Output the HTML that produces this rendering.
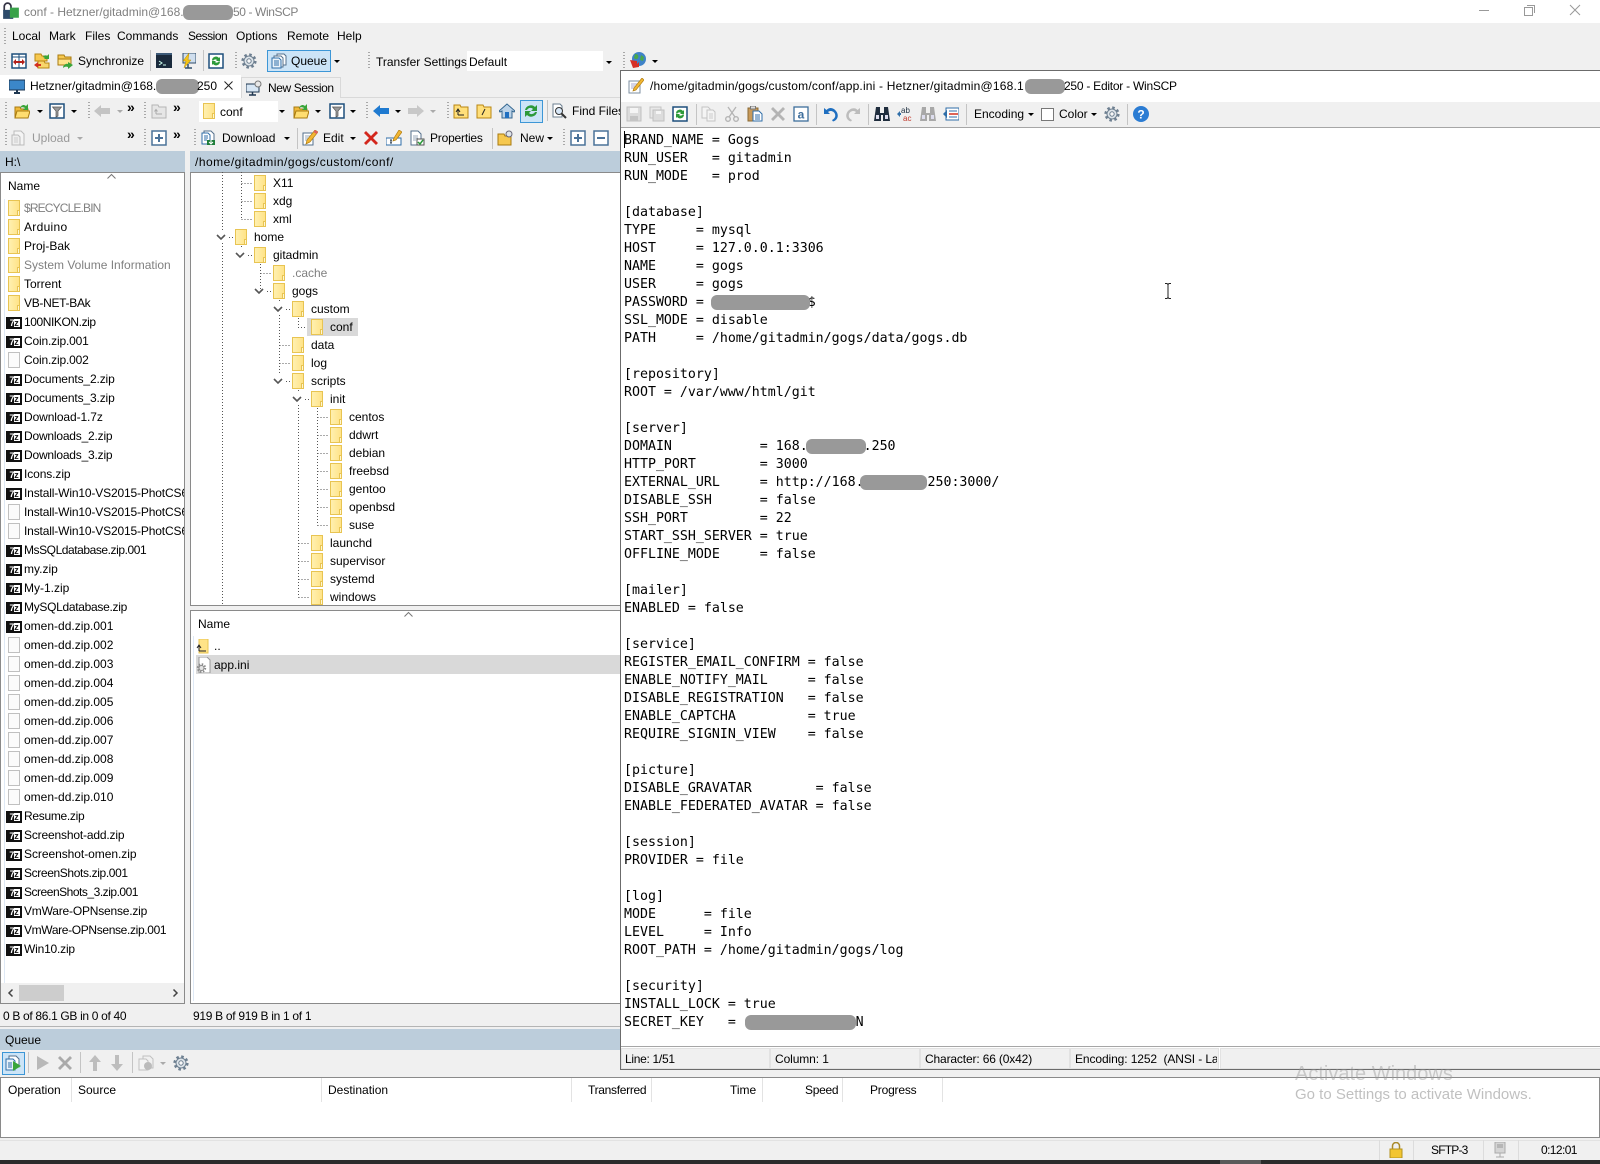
<!DOCTYPE html>
<html><head><meta charset="utf-8"><title>WinSCP</title>
<style>
html,body{margin:0;padding:0}
body{width:1600px;height:1164px;overflow:hidden;position:relative;background:#f0f0f0;font:12px/16px "Liberation Sans",sans-serif;color:#000}
.p{position:absolute}
.t{position:absolute;white-space:nowrap;line-height:16px;height:16px}
.i{position:absolute;width:16px;height:16px;overflow:visible}
.g{position:absolute;width:2px;height:18px;background:repeating-linear-gradient(#a8a8a8 0 1px,transparent 1px 3px)}
.s{position:absolute;width:1px;height:21px;background:#c4c4c4}
.a{position:absolute;width:0;height:0;border:3px solid transparent;border-top:3px solid #000;border-bottom:0}
.a.m{border-top-color:#aaa}
.b{position:absolute;background:#999;border-radius:6px;height:15px}
.ch{position:absolute;font-size:14px;font-weight:bold;line-height:10px}
.f{position:absolute;width:12px;height:16px;box-sizing:border-box;background:linear-gradient(90deg,#fff0b0,#ffe388);border:1px solid #e8c452;display:block}
.f:after{content:"";position:absolute;right:-1px;bottom:-1px;width:1px;height:4px;background:#fff6d0;border:1px solid #e8c452}
.d{position:absolute;left:8px;top:1px;width:12px;height:16px;box-sizing:border-box;background:#fbfbfb;border:1px solid #c0c0c0;display:block}
.z{position:absolute;left:6px;top:4px;width:16px;height:12px;box-sizing:border-box;border:2px solid #111;background:linear-gradient(90deg,#111 50%,#fff 50%);font:bold 9px/8px "Liberation Sans",sans-serif;text-align:center;overflow:hidden;display:block;font-style:normal;color:#111}
.z b{color:#fff;font-weight:bold}
.panel{position:absolute;background:#fff;box-shadow:inset 0 0 0 1px #8a8a8a;overflow:hidden}
.r{height:19px;line-height:19px;padding-left:23px;position:relative;white-space:nowrap;overflow:hidden}
.r .f{left:7px;top:1px}
.r .d{left:7px}
.r .z{left:5px}
.n{position:absolute;height:16px;line-height:16px;white-space:nowrap;padding-left:19px}
.n .f{left:0;top:0}
.gr{color:#808080}
.hd{position:absolute;height:21px;background:#bccddb}
pre{position:absolute;margin:0;left:624px;top:132px;font:13.28px/18px "DejaVu Sans Mono","Liberation Mono",monospace;color:#000}
.sp{position:absolute;top:1078px;width:1px;height:24px;background:#e3e3e3}
.es{position:absolute;top:1049px;height:19px;background:#f0f0f0;box-shadow:0 0 0 1px #e2e2e2}
</style></head><body>
<svg width="0" height="0" style="position:absolute"><defs>
<symbol id="cmp" viewBox="0 0 16 16"><rect x="1" y="1" width="14" height="14" fill="#fff" stroke="#1d4f7c" stroke-width="1.5"/><path d="M8 1v14M1 4h14" stroke="#1d4f7c"/><path d="M2 9l3-3v6zM14 9l-3-3v6zM5 8h6v2H5z" fill="#b3201a"/></symbol>
<symbol id="sf" viewBox="0 0 16 16"><path d="M1 1h6l1 2h5v5H1z" fill="#f6c84f" stroke="#b98612"/><path d="M4 8h6l1 2h4v5H4z" fill="#f8d56c" stroke="#b98612"/><path d="M9 4c1-2 3-2 4-1l2-2v5h-5l1-1-2-1z" fill="#39a53a"/><path d="M0 12l4-3v2h3v2H4v2z" fill="#d3301f"/></symbol>
<symbol id="sg" viewBox="0 0 16 16"><path d="M1 2h6l1 2h6v8H1z" fill="#f6c84f" stroke="#a87a10"/><path d="M1 6h13v6H1z" fill="#ffe38a" stroke="#a87a10"/><path d="M6 15c0-3 3-5 5-4V9l5 3-5 4v-2c-2-1-4 0-5 1z" fill="#3aa53a"/></symbol>
<symbol id="term" viewBox="0 0 16 16"><rect x="0" y="0" width="16" height="15" fill="#1a2a3c"/><rect x="0" y="0" width="16" height="2" fill="#3d5a78"/><path d="M3 8l3 2-3 2" fill="none" stroke="#cfe"/><path d="M7 12h3" stroke="#cfe"/></symbol>
<symbol id="bolt" viewBox="0 0 16 16"><rect x="3" y="0" width="13" height="10" fill="#cfdeee" stroke="#2f4d6b"/><path d="M5 15h7M8 11v4" stroke="#2f4d6b" stroke-width="1.500"/><path d="M9 0L3 8h3L4 15l7-8H8z" fill="#f5c518" stroke="#b88a00" stroke-width=".5"/></symbol>
<symbol id="rf" viewBox="0 0 16 16"><rect x="1" y="1" width="14" height="14" fill="#fff" stroke="#1d4f7c" stroke-width="1.5"/><path d="M4 7a4 4 0 0 1 7-2l1-1v4H8l1-1a2.500 2.500 0 0 0-4 1z" fill="#2d9a3a"/><path d="M12 9a4 4 0 0 1-7 2l-1 1V8h4l-1 1a2.500 2.500 0 0 0 4-1z" fill="#2d9a3a"/></symbol>
<symbol id="gear" viewBox="0 0 16 16"><circle cx="8" cy="8" r="6.300" fill="none" stroke="#6d7f90" stroke-width="2.600" stroke-dasharray="2.500 2.450"/><circle cx="8" cy="8" r="5" fill="#dfe5ea" stroke="#6d7f90"/><circle cx="8" cy="8" r="2.200" fill="#f8f8f8" stroke="#6d7f90"/></symbol>
<symbol id="q" viewBox="0 0 16 16"><path d="M6 1h7l2 2v9h-9z" fill="#fff" stroke="#55708c"/><path d="M3 3h7l2 2v9H3z" fill="#fff" stroke="#55708c"/><path d="M1 5h7l2 2v8H1z" fill="#eaf2fa" stroke="#2f6ea8"/><path d="M3 8h5M3 10h5M3 12h5" stroke="#2f6ea8"/></symbol>
<symbol id="mon" viewBox="0 0 16 16"><rect x="0" y="1" width="16" height="10" fill="#3b87c9" stroke="#1e3650"/><path d="M5 14h6M8 11v3" stroke="#1e3650" stroke-width="2"/></symbol>
<symbol id="ns" viewBox="0 0 16 16"><rect x="0" y="4" width="13" height="8" fill="#d7e6f4" stroke="#1e3650"/><path d="M3 15h7M6.500 12v3" stroke="#1e3650" stroke-width="1.500"/><circle cx="12" cy="4" r="3" fill="#e8e8e8" stroke="#777"/></symbol>
<symbol id="fo" viewBox="0 0 16 16"><path d="M1 4h5l1 2h7v9H1z" fill="#f0b93a" stroke="#a87a10"/><path d="M3 8h13l-2 7H1z" fill="#ffdd70" stroke="#a87a10"/><path d="M6 5c1-3 4-4 6-2l2-2v6H9l2-2c-2-1-3-1-5 0z" fill="#3aa53a"/></symbol>
<symbol id="fil" viewBox="0 0 16 16"><rect x="1" y="1" width="14" height="14" fill="#fff" stroke="#1d4f7c" stroke-width="1.500"/><path d="M3.500 4h9L9 8v5L7 14V8z" fill="#9a9a9a" stroke="#555" stroke-width=".7"/></symbol>
<symbol id="al" viewBox="0 0 16 16"><path d="M0 8l7-6v3h9v6H7v3z" fill="currentColor"/></symbol>
<symbol id="ar" viewBox="0 0 16 16"><path d="M16 8L9 2v3H0v6h9v3z" fill="currentColor"/></symbol>
<symbol id="fg" viewBox="0 0 16 16"><path d="M1 2h6l1 2h7v11H1z" fill="#e6e6e6" stroke="#b5b5b5"/><path d="M5 11h6M5 11V7M3.500 8.500L5 6.500l1.500 2" fill="none" stroke="#aaa"/></symbol>
<symbol id="fu" viewBox="0 0 16 16"><path d="M1 2h6l1 2h7v11H1z" fill="#ffdf7a" stroke="#b98612"/><path d="M5 12h6M5 12V7M3 9l2-3 2 3" fill="none" stroke="#222"/></symbol>
<symbol id="fr" viewBox="0 0 16 16"><path d="M1 2h6l1 2h7v11H1z" fill="#ffdf7a" stroke="#b98612"/><path d="M6 12l3-6" stroke="#222"/></symbol>
<symbol id="home" viewBox="0 0 16 16"><path d="M8 1L0 8l1 1 2-1v7h10V8l2 1 1-1z" fill="#bcd3e8" stroke="#33668f"/><rect x="6" y="9" width="4" height="6" fill="#1f6fc0"/></symbol>
<symbol id="find" viewBox="0 0 16 16"><path d="M2 1h7l2 2v11H2z" fill="#fff" stroke="#6c7f90"/><circle cx="8" cy="8" r="3.500" fill="#d8e8f8" stroke="#333"/><path d="M10.500 10.500L15 15" stroke="#333" stroke-width="2"/></symbol>
<symbol id="ul" viewBox="0 0 16 16"><path d="M3 1h7l3 3v11H3z" fill="#f4f4f4" stroke="#bbb"/><path d="M1 5h6l2 2v8H1z" fill="#eee" stroke="#bbb"/><path d="M3 8h4M3 10h4M3 12h4" stroke="#ccc"/></symbol>
<symbol id="pl" viewBox="0 0 16 16"><rect x="1" y="1" width="14" height="14" fill="#fff" stroke="#4a7299" stroke-width="1.500"/><path d="M4 8h8M8 4v8" stroke="#4a7299" stroke-width="2"/></symbol>
<symbol id="mi" viewBox="0 0 16 16"><rect x="1" y="1" width="14" height="14" fill="#fff" stroke="#4a7299" stroke-width="1.500"/><path d="M4 8h8" stroke="#4a7299" stroke-width="2"/></symbol>
<symbol id="dl" viewBox="0 0 16 16"><path d="M4 1h7l3 3v8H4z" fill="#fff" stroke="#55708c"/><path d="M2 3h6l2 2v9H2z" fill="#fff" stroke="#2f6ea8"/><path d="M4 6h4M4 8h4M4 10h3" stroke="#2f6ea8"/><path d="M7 10h8v5H7z" fill="#1e7d3a"/><path d="M11 9v5M9 12l2 2 2-2" stroke="#fff" fill="none"/></symbol>
<symbol id="ed" viewBox="0 0 16 16"><path d="M1 3h10v12H1z" fill="#fff" stroke="#55708c"/><path d="M3 6h5M3 8h4M3 10h3" stroke="#9ab"/><path d="M13 0l3 2-8 10-4 2 1-4z" fill="#f2b632" stroke="#b07c10" stroke-width=".7"/><path d="M13 0l3 2-1.500 2-3-2z" fill="#e06060"/></symbol>
<symbol id="x" viewBox="0 0 16 16"><path d="M3 1L8 6l5-5 2 2-5 5 5 5-2 2-5-5-5 5-2-2 5-5-5-5z" fill="currentColor"/></symbol>
<symbol id="rn" viewBox="0 0 16 16"><rect x="0" y="8" width="15" height="7" fill="#fff" stroke="#2f6ea8"/><path d="M4 10h2M5 10v3M4 13h2" stroke="#234"/><path d="M13 0l3 2-6 8-3 1 1-3z" fill="#f2b632" stroke="#b07c10" stroke-width=".7"/></symbol>
<symbol id="pr" viewBox="0 0 16 16"><path d="M2 1h7l3 3v11H2z" fill="#fff" stroke="#55708c"/><path d="M4 6h5M4 8h5M4 10h3" stroke="#9ab"/><rect x="8" y="9" width="7" height="6" fill="#fff" stroke="#555"/><path d="M9 12l2 2 3-4" fill="none" stroke="#2d9a3a" stroke-width="1.500"/></symbol>
<symbol id="nw" viewBox="0 0 16 16"><path d="M1 4h6l1 2h6v9H1z" fill="#f6c84f" stroke="#a87a10"/><circle cx="12" cy="4" r="3" fill="#dfe5ea" stroke="#667"/></symbol>
<symbol id="sv" viewBox="0 0 16 16"><rect x="1" y="1" width="14" height="14" fill="#dcdcdc" stroke="#c0c0c0"/><rect x="4" y="2" width="8" height="5" fill="#f5f5f5"/><rect x="4" y="10" width="8" height="5" fill="#c4c4c4"/></symbol>
<symbol id="sa" viewBox="0 0 16 16"><rect x="1" y="1" width="11" height="11" fill="#e8e8e8" stroke="#c4c4c4"/><rect x="4" y="4" width="11" height="11" fill="#dcdcdc" stroke="#c0c0c0"/><rect x="7" y="5" width="5" height="3" fill="#f5f5f5"/></symbol>
<symbol id="cp" viewBox="0 0 16 16"><path d="M1 1h6l2 2v9H1z" fill="#f4f4f4" stroke="#c4c4c4"/><path d="M6 4h6l2 2v9H6z" fill="#f4f4f4" stroke="#c4c4c4"/><path d="M8 8h4M8 10h4M8 12h4" stroke="#ccc"/></symbol>
<symbol id="ct" viewBox="0 0 16 16"><circle cx="4" cy="13" r="2.300" fill="none" stroke="#b4b4b4" stroke-width="1.400"/><circle cx="12" cy="13" r="2.300" fill="none" stroke="#b4b4b4" stroke-width="1.400"/><path d="M5 11l7-10M11 11L4 1" stroke="#b4b4b4" stroke-width="1.300"/></symbol>
<symbol id="ps" viewBox="0 0 16 16"><rect x="1" y="2" width="10" height="13" fill="#c89a5a" stroke="#8a6a35"/><rect x="3.500" y="0" width="5" height="3" fill="#ddd" stroke="#777"/><path d="M6 5h6l3 3v7H6z" fill="#fff" stroke="#2f6ea8"/><path d="M8 9h5M8 11h5M8 13h5" stroke="#2f6ea8"/></symbol>
<symbol id="sl" viewBox="0 0 16 16"><rect x="1" y="1" width="14" height="14" fill="#fff" stroke="#3d6e9c" stroke-width="1.300"/><text x="8" y="12.500" font-size="12" font-weight="bold" text-anchor="middle" fill="#3d6e9c" font-family="Liberation Sans">a</text></symbol>
<symbol id="un" viewBox="0 0 16 16"><path d="M1 2v6h6L5 6c2-2 6-1 7 2 1 3-1 5-3 6l1 1.500c4-1 6-5 4-9S7 0 3.500 4z" fill="currentColor"/></symbol>
<symbol id="re" viewBox="0 0 16 16"><path d="M15 2v6H9l2-2c-2-2-6-1-7 2-1 3 1 5 3 6l-1 1.500c-4-1-6-5-4-9s8-6 10.500-2.500z" fill="currentColor"/></symbol>
<symbol id="bn" viewBox="0 0 16 16"><path d="M2 1h4v6h4V1h4l2 14H9V9H7v6H0z" fill="currentColor"/><rect x="2" y="9" width="3" height="4" fill="#dde"/><rect x="11" y="9" width="3" height="4" fill="#dde"/></symbol>
<symbol id="rp" viewBox="0 0 16 16"><text x="4" y="7" font-size="8" fill="#234" font-family="Liberation Sans">ab</text><text x="6" y="15" font-size="8" fill="#c0392b" font-family="Liberation Sans">ac</text><path d="M0 8l3-3v2h1v2H3v2z" fill="#2f6ea8"/></symbol>
<symbol id="gt" viewBox="0 0 16 16"><rect x="3" y="2" width="13" height="12" fill="#fff" stroke="#2f6ea8"/><path d="M6 5h8M6 11h8" stroke="#2f6ea8"/><path d="M6 8h9" stroke="#d3301f" stroke-width="1.500"/><path d="M0 8l4-4v8z" fill="#2f6ea8"/></symbol>
<symbol id="hp" viewBox="0 0 16 16"><circle cx="8" cy="8" r="8" fill="#2b7cd3"/><text x="8" y="12.500" font-size="12" font-weight="bold" text-anchor="middle" fill="#fff" font-family="Liberation Sans">?</text></symbol>
<symbol id="pk" viewBox="0 0 16 16"><path d="M2 1l12 7-12 7z" fill="#b8b8b8"/></symbol>
<symbol id="up" viewBox="0 0 16 16"><path d="M8 0l6 7H10v9H6V7H2z" fill="#bdbdbd"/></symbol>
<symbol id="dn" viewBox="0 0 16 16"><path d="M8 16l6-7H10V0H6v9H2z" fill="#bdbdbd"/></symbol>
<symbol id="qp" viewBox="0 0 16 16"><path d="M5 1h7l3 3v9H5z" fill="#f0f0f0" stroke="#c0c0c0"/><path d="M1 4h7l2 2v9H1z" fill="#f4f4f4" stroke="#c0c0c0"/><circle cx="10" cy="11" r="4" fill="#bbb"/></symbol>
<symbol id="qr" viewBox="0 0 16 16"><path d="M4 1h7l3 3v8H4z" fill="#fff" stroke="#55708c"/><path d="M1 4h7l2 2v9H1z" fill="#e8f1fa" stroke="#2f6ea8"/><path d="M3 8h4M3 10h4M3 12h4" stroke="#2f6ea8"/><path d="M8 6l8 5-8 5z" fill="#3aa53a"/></symbol>
<symbol id="lk" viewBox="0 0 16 16"><path d="M4.500 7V4a3.500 3.500 0 0 1 7 0v3" fill="none" stroke="#a8892a" stroke-width="1.500"/><rect x="2" y="7" width="12" height="9" fill="#f2c531" stroke="#b3921f"/></symbol>
<symbol id="nt" viewBox="0 0 16 16"><rect x="3" y="0" width="10" height="11" fill="#d4d4d4" stroke="#aaa"/><path d="M5 3h6M5 5h6" stroke="#999"/><path d="M8 11v4M4 15h8" stroke="#aaa"/></symbol>
<symbol id="pe" viewBox="0 0 16 16"><path d="M1 3h11v12H1z" fill="#fff" stroke="#7d8fa0"/><path d="M3 6h6M3 8h5M3 10h3" stroke="#aac"/><path d="M14 0l2 2-8 10-3 1 1-3z" fill="#f2b632" stroke="#b07c10" stroke-width=".7"/></symbol>
<symbol id="ini" viewBox="0 0 16 16"><path d="M3 0h8l3 3v13H3z" fill="#fff" stroke="#999"/><circle cx="5.500" cy="11" r="3.800" fill="none" stroke="#8a8a8a" stroke-width="1.800" stroke-dasharray="1.500 1.500"/><circle cx="5.500" cy="11" r="2.500" fill="#e4e4e4" stroke="#888"/></symbol>
<symbol id="upf" viewBox="0 0 16 16"><path d="M3 0h9v14H3z" fill="#ffe388" stroke="#e8c452"/><path d="M2 12h7M2 12V7M0 9l2-3 2 3" transform="translate(1 0)" fill="none" stroke="#222"/></symbol>
<symbol id="wn" viewBox="0 0 16 16"><circle cx="9" cy="7" r="7" fill="#3f83c8"/><path d="M5 2c3 0 4 2 3 4S5 7 4 6zM11 3l3 2-1 4-3-1z" fill="#4aa84a"/><path d="M0 8l7 1v3l2-2v5l-6 1z" fill="#d62f26"/></symbol>
</defs></svg>

<!-- TITLE BAR -->
<div class="p" style="left:0;top:0;width:1600px;height:23px;background:#fff"></div>
<svg class="i" style="left:2px;top:2px;width:18px;height:18px" viewBox="0 0 16 16"><path d="M2 8V4a3 3 0 0 1 6 0v4" fill="none" stroke="#334" stroke-width="1.500"/><rect x="1" y="7" width="9" height="8" fill="#2c4a6a"/><path d="M7 5h8v9H7z" fill="#39a24a"/></svg>
<div class="t" style="left:24px;top:4px;color:#808080">conf - Hetzner/gitadmin@168.</div>
<div class="b" style="left:183px;top:5px;width:50px"></div>
<div class="t" style="left:233px;top:4px;color:#808080;letter-spacing:-.4px">50 - WinSCP</div>
<div class="p" style="left:1479px;top:10px;width:10px;height:1px;background:#999"></div>
<div class="p" style="left:1524px;top:7px;width:7px;height:7px;border:1px solid #999"></div>
<div class="p" style="left:1527px;top:5px;width:7px;height:7px;border:1px solid #999;border-left:0;border-bottom:0"></div>
<svg class="i" style="left:1569px;top:4px;width:12px;height:12px" viewBox="0 0 12 12"><path d="M1 1l10 10M11 1L1 11" stroke="#999" stroke-width="1"/></svg>

<!-- MENU -->
<div class="g" style="left:4px;top:28px;height:16px"></div>
<div class="t" style="left:12px;top:28px">Local</div>
<div class="t" style="left:49px;top:28px">Mark</div>
<div class="t" style="left:85px;top:28px">Files</div>
<div class="t" style="left:117px;top:28px">Commands</div>
<div class="t" style="left:188px;top:28px;letter-spacing:-.5px">Session</div>
<div class="t" style="left:236px;top:28px">Options</div>
<div class="t" style="left:287px;top:28px">Remote</div>
<div class="t" style="left:337px;top:28px">Help</div>

<!-- TOOLBAR 1 -->
<div class="g" style="left:4px;top:52px"></div>
<svg class="i" style="left:11px;top:53px"><use href="#cmp"/></svg>
<svg class="i" style="left:34px;top:53px"><use href="#sf"/></svg>
<svg class="i" style="left:57px;top:53px"><use href="#sg"/></svg>
<div class="t" style="left:78px;top:53px">Synchronize</div>
<div class="s" style="left:150px;top:50px"></div>
<svg class="i" style="left:156px;top:53px"><use href="#term"/></svg>
<svg class="i" style="left:180px;top:53px"><use href="#bolt"/></svg>
<div class="s" style="left:203px;top:50px"></div>
<svg class="i" style="left:208px;top:53px"><use href="#rf"/></svg>
<div class="g" style="left:235px;top:52px"></div>
<svg class="i" style="left:241px;top:53px"><use href="#gear"/></svg>
<div class="p" style="left:267px;top:50px;width:62px;height:20px;background:#cce4f7;border:1px solid #3c96d6"></div>
<svg class="i" style="left:271px;top:53px"><use href="#q"/></svg>
<div class="t" style="left:291px;top:53px">Queue</div>
<div class="a" style="left:334px;top:60px"></div>
<div class="g" style="left:368px;top:52px"></div>
<div class="t" style="left:376px;top:54px">Transfer Settings</div>
<div class="p" style="left:467px;top:51px;width:147px;height:20px;background:#fff"></div>
<div class="t" style="left:469px;top:54px">Default</div>
<div class="p" style="left:603px;top:51px;width:11px;height:20px;background:#f0f0f0"></div>
<div class="a" style="left:606px;top:61px"></div>
<div class="g" style="left:623px;top:52px"></div>
<svg class="i" style="left:630px;top:52px"><use href="#wn"/></svg>
<div class="a" style="left:652px;top:60px"></div>

<!-- TABS -->
<div class="p" style="left:0;top:97px;width:640px;height:1px;background:#d9d9d9"></div>
<div class="p" style="left:0;top:75px;width:241px;height:23px;background:#fff"></div>
<svg class="i" style="left:9px;top:79px"><use href="#mon"/></svg>
<div class="t" style="left:30px;top:78px">Hetzner/gitadmin@168.</div>
<div class="b" style="left:156px;top:79px;width:43px"></div>
<div class="t" style="left:197px;top:78px">250</div>
<svg class="i" style="left:224px;top:81px;width:9px;height:9px" viewBox="0 0 9 9"><path d="M.5.500l8 8M8.500.500l-8 8" stroke="#222" stroke-width="1"/></svg>
<div class="p" style="left:241px;top:77px;width:98px;height:20px;border:1px solid #d9d9d9;border-bottom:0;background:#f0f0f0"></div>
<svg class="i" style="left:246px;top:80px"><use href="#ns"/></svg>
<div class="t" style="left:268px;top:80px;letter-spacing:-.4px">New Session</div>

<!-- TOOLBAR 2 -->
<div class="g" style="left:5px;top:102px"></div>
<svg class="i" style="left:14px;top:103px"><use href="#fo"/></svg>
<div class="a" style="left:37px;top:110px"></div>
<svg class="i" style="left:49px;top:103px"><use href="#fil"/></svg>
<div class="a" style="left:71px;top:110px"></div>
<div class="g" style="left:88px;top:102px"></div>
<svg class="i" style="left:94px;top:103px;color:#c4c4c4"><use href="#al"/></svg>
<div class="a m" style="left:117px;top:110px"></div>
<div class="ch" style="left:127px;top:102px">»</div>
<div class="g" style="left:144px;top:102px"></div>
<svg class="i" style="left:151px;top:103px"><use href="#fg"/></svg>
<div class="ch" style="left:173px;top:102px">»</div>
<div class="p" style="left:199px;top:101px;width:90px;height:21px;background:#fff"></div>
<i class="f" style="left:203px;top:103px"></i>
<div class="t" style="left:220px;top:104px">conf</div>
<div class="p" style="left:278px;top:101px;width:11px;height:21px;background:#f0f0f0"></div>
<div class="a" style="left:279px;top:110px"></div>
<svg class="i" style="left:293px;top:103px"><use href="#fo"/></svg>
<div class="a" style="left:315px;top:110px"></div>
<svg class="i" style="left:329px;top:103px"><use href="#fil"/></svg>
<div class="a" style="left:350px;top:110px"></div>
<div class="g" style="left:366px;top:102px"></div>
<svg class="i" style="left:373px;top:103px;color:#1f7ad0"><use href="#al"/></svg>
<div class="a" style="left:395px;top:110px"></div>
<svg class="i" style="left:408px;top:103px;color:#c8c8c8"><use href="#ar"/></svg>
<div class="a m" style="left:430px;top:110px"></div>
<div class="g" style="left:447px;top:102px"></div>
<svg class="i" style="left:453px;top:103px"><use href="#fu"/></svg>
<svg class="i" style="left:476px;top:103px"><use href="#fr"/></svg>
<svg class="i" style="left:499px;top:103px"><use href="#home"/></svg>
<div class="p" style="left:520px;top:100px;width:21px;height:21px;background:#cce4f7;border:1px solid #3c96d6"></div>
<svg class="i" style="left:523px;top:103px" viewBox="0 0 16 16"><path d="M2 7a6 6 0 0 1 10-3l2-2v6H8l2-2c-2-2-5-1-6 1z" fill="#2d9a3a"/><path d="M14 9a6 6 0 0 1-10 3l-2 2V8h6l-2 2c2 2 5 1 6-1z" fill="#2d9a3a"/></svg>
<div class="s" style="left:547px;top:100px"></div>
<svg class="i" style="left:551px;top:103px"><use href="#find"/></svg>
<div class="t" style="left:572px;top:103px">Find Files</div>

<!-- TOOLBAR 3 -->
<div class="g" style="left:5px;top:129px"></div>
<svg class="i" style="left:11px;top:130px"><use href="#ul"/></svg>
<div class="t" style="left:32px;top:130px;color:#999">Upload</div>
<div class="a m" style="left:77px;top:137px"></div>
<div class="ch" style="left:127px;top:129px">»</div>
<div class="g" style="left:144px;top:129px"></div>
<svg class="i" style="left:151px;top:130px"><use href="#pl"/></svg>
<div class="ch" style="left:173px;top:129px">»</div>
<div class="g" style="left:194px;top:129px"></div>
<svg class="i" style="left:200px;top:130px"><use href="#dl"/></svg>
<div class="t" style="left:222px;top:130px">Download</div>
<div class="a" style="left:284px;top:137px"></div>
<div class="s" style="left:297px;top:128px"></div>
<svg class="i" style="left:302px;top:130px"><use href="#ed"/></svg>
<div class="t" style="left:323px;top:130px">Edit</div>
<div class="a" style="left:350px;top:137px"></div>
<svg class="i" style="left:363px;top:130px;color:#d3261c"><use href="#x"/></svg>
<svg class="i" style="left:386px;top:130px"><use href="#rn"/></svg>
<svg class="i" style="left:409px;top:130px"><use href="#pr"/></svg>
<div class="t" style="left:430px;top:130px;letter-spacing:-.2px">Properties</div>
<div class="s" style="left:492px;top:128px"></div>
<svg class="i" style="left:497px;top:130px"><use href="#nw"/></svg>
<div class="t" style="left:520px;top:130px">New</div>
<div class="a" style="left:547px;top:137px"></div>
<div class="g" style="left:563px;top:129px"></div>
<svg class="i" style="left:570px;top:130px"><use href="#pl"/></svg>
<svg class="i" style="left:593px;top:130px"><use href="#mi"/></svg>

<!-- PATH HEADERS -->
<div class="hd" style="left:0;top:151px;width:185px"></div>
<div class="t" style="left:5px;top:154px">H:\</div>
<div class="hd" style="left:190px;top:151px;width:440px"></div>
<div class="t" style="left:195px;top:154px;letter-spacing:.5px">/home/gitadmin/gogs/custom/conf/</div>

<!-- LEFT PANEL -->
<div class="panel" style="left:0;top:172px;width:185px;height:832px">
<div class="p" style="left:4px;top:27px;width:1px;height:784px;background:#dfe9f5"></div>
<div class="t" style="left:8px;top:6px">Name</div>
<svg class="i" style="left:107px;top:2px;width:9px;height:5px" viewBox="0 0 9 5"><path d="M.5 4.500l4-4 4 4" fill="none" stroke="#777"/></svg>
<div class="p" style="left:1px;top:27px;width:183px;overflow:hidden">
<div class="r gr" style="letter-spacing:-.85px"><i class="f"></i>$RECYCLE.BIN</div>
<div class="r" style="letter-spacing:.3px"><i class="f"></i>Arduino</div>
<div class="r"><i class="f"></i>Proj-Bak</div>
<div class="r gr"><i class="f"></i>System Volume Information</div>
<div class="r"><i class="f"></i>Torrent</div>
<div class="r" style="letter-spacing:-.3px"><i class="f"></i>VB-NET-BAk</div>
<div class="r" style="letter-spacing:-.42px"><i class="z"><b>7</b>z</i>100NIKON.zip</div>
<div class="r" style="letter-spacing:-.17px"><i class="z"><b>7</b>z</i>Coin.zip.001</div>
<div class="r" style="letter-spacing:-.17px"><i class="d"></i>Coin.zip.002</div>
<div class="r" style="letter-spacing:-.14px"><i class="z"><b>7</b>z</i>Documents_2.zip</div>
<div class="r" style="letter-spacing:-.14px"><i class="z"><b>7</b>z</i>Documents_3.zip</div>
<div class="r" style="letter-spacing:-.1px"><i class="z"><b>7</b>z</i>Download-1.7z</div>
<div class="r" style="letter-spacing:-.2px"><i class="z"><b>7</b>z</i>Downloads_2.zip</div>
<div class="r" style="letter-spacing:-.2px"><i class="z"><b>7</b>z</i>Downloads_3.zip</div>
<div class="r" style="letter-spacing:-.1px"><i class="z"><b>7</b>z</i>Icons.zip</div>
<div class="r" style="letter-spacing:-.15px"><i class="z"><b>7</b>z</i>Install-Win10-VS2015-PhotCS6.zip</div>
<div class="r" style="letter-spacing:-.15px"><i class="d"></i>Install-Win10-VS2015-PhotCS6.zip</div>
<div class="r" style="letter-spacing:-.15px"><i class="d"></i>Install-Win10-VS2015-PhotCS6.zip</div>
<div class="r" style="letter-spacing:-.44px"><i class="z"><b>7</b>z</i>MsSQLdatabase.zip.001</div>
<div class="r"><i class="z"><b>7</b>z</i>my.zip</div>
<div class="r"><i class="z"><b>7</b>z</i>My-1.zip</div>
<div class="r" style="letter-spacing:-.3px"><i class="z"><b>7</b>z</i>MySQLdatabase.zip</div>
<div class="r"><i class="z"><b>7</b>z</i>omen-dd.zip.001</div>
<div class="r"><i class="d"></i>omen-dd.zip.002</div>
<div class="r"><i class="d"></i>omen-dd.zip.003</div>
<div class="r"><i class="d"></i>omen-dd.zip.004</div>
<div class="r"><i class="d"></i>omen-dd.zip.005</div>
<div class="r"><i class="d"></i>omen-dd.zip.006</div>
<div class="r"><i class="d"></i>omen-dd.zip.007</div>
<div class="r"><i class="d"></i>omen-dd.zip.008</div>
<div class="r"><i class="d"></i>omen-dd.zip.009</div>
<div class="r"><i class="d"></i>omen-dd.zip.010</div>
<div class="r" style="letter-spacing:-.3px"><i class="z"><b>7</b>z</i>Resume.zip</div>
<div class="r" style="letter-spacing:-.17px"><i class="z"><b>7</b>z</i>Screenshot-add.zip</div>
<div class="r" style="letter-spacing:-.05px"><i class="z"><b>7</b>z</i>Screenshot-omen.zip</div>
<div class="r" style="letter-spacing:-.37px"><i class="z"><b>7</b>z</i>ScreenShots.zip.001</div>
<div class="r" style="letter-spacing:-.48px"><i class="z"><b>7</b>z</i>ScreenShots_3.zip.001</div>
<div class="r" style="letter-spacing:-.2px"><i class="z"><b>7</b>z</i>VmWare-OPNsense.zip</div>
<div class="r" style="letter-spacing:-.35px"><i class="z"><b>7</b>z</i>VmWare-OPNsense.zip.001</div>
<div class="r" style="letter-spacing:-.2px"><i class="z"><b>7</b>z</i>Win10.zip</div>
</div>
<div class="p" style="left:1px;top:811px;width:183px;height:20px;background:#f0f0f0"></div>
<div class="p" style="left:19px;top:813px;width:45px;height:16px;background:#cdcdcd"></div>
<svg class="i" style="left:6px;top:816px;width:10px;height:10px" viewBox="0 0 10 10"><path d="M6.500 1.500L3 5l3.500 3.500" fill="none" stroke="#444" stroke-width="1.500"/></svg>
<svg class="i" style="left:170px;top:816px;width:10px;height:10px" viewBox="0 0 10 10"><path d="M3.500 1.500L7 5 3.500 8.500" fill="none" stroke="#444" stroke-width="1.500"/></svg>
</div>

<!-- TREE -->
<div class="panel" style="left:190px;top:172px;width:440px;height:434px">
<svg class="p" style="left:0;top:0" width="440" height="434" viewBox="190 172 440 434">
<path d="M222.500 172V231M222.500 243V606M241.500 172V219.500M241.500 183.500H253M241.500 201.500H253M241.500 219.500H253M241.500 243V249M260.500 261V291M260.500 273.500H272M279.500 297V303M279.500 315V375M279.500 345.500H291M279.500 363.500H291M298.500 315V327.500H310M298.500 387V393M298.500 405V597.500M298.500 543.500H310M298.500 561.500H310M298.500 579.500H310M298.500 597.500H310M317.500 405V525.500M317.500 417.500H329M317.500 435.500H329M317.500 453.500H329M317.500 471.500H329M317.500 489.500H329M317.500 507.500H329M317.500 525.500H329M229 237.500H234M248 255.500H253M267 291.500H272M286 309.500H291M286 381.500H291M305 399.500H310" stroke="#555" stroke-dasharray="1 2" fill="none"/>
<g fill="none" stroke="#555" stroke-width="1.600"><path d="M217 235l4 4 4-4M236 253l4 4 4-4M255 289l4 4 4-4M274 307l4 4 4-4M274 379l4 4 4-4M293 397l4 4 4-4"/></g>
</svg>
<div class="p" style="left:117px;top:146px;width:51px;height:18px;background:#d9d9d9"></div>
<div class="n" style="left:64px;top:3px"><i class="f"></i>X11</div>
<div class="n" style="left:64px;top:21px"><i class="f"></i>xdg</div>
<div class="n" style="left:64px;top:39px"><i class="f"></i>xml</div>
<div class="n" style="left:45px;top:57px"><i class="f"></i>home</div>
<div class="n" style="left:64px;top:75px"><i class="f"></i>gitadmin</div>
<div class="n gr" style="left:83px;top:93px"><i class="f"></i>.cache</div>
<div class="n" style="left:83px;top:111px"><i class="f"></i>gogs</div>
<div class="n" style="left:102px;top:129px"><i class="f"></i>custom</div>
<div class="n" style="left:121px;top:147px"><i class="f"></i>conf</div>
<div class="n" style="left:102px;top:165px"><i class="f"></i>data</div>
<div class="n" style="left:102px;top:183px"><i class="f"></i>log</div>
<div class="n" style="left:102px;top:201px"><i class="f"></i>scripts</div>
<div class="n" style="left:121px;top:219px"><i class="f"></i>init</div>
<div class="n" style="left:140px;top:237px"><i class="f"></i>centos</div>
<div class="n" style="left:140px;top:255px"><i class="f"></i>ddwrt</div>
<div class="n" style="left:140px;top:273px"><i class="f"></i>debian</div>
<div class="n" style="left:140px;top:291px"><i class="f"></i>freebsd</div>
<div class="n" style="left:140px;top:309px"><i class="f"></i>gentoo</div>
<div class="n" style="left:140px;top:327px"><i class="f"></i>openbsd</div>
<div class="n" style="left:140px;top:345px"><i class="f"></i>suse</div>
<div class="n" style="left:121px;top:363px"><i class="f"></i>launchd</div>
<div class="n" style="left:121px;top:381px"><i class="f"></i>supervisor</div>
<div class="n" style="left:121px;top:399px"><i class="f"></i>systemd</div>
<div class="n" style="left:121px;top:417px"><i class="f"></i>windows</div>
</div>

<!-- REMOTE LIST -->
<div class="panel" style="left:190px;top:610px;width:440px;height:394px">
<div class="t" style="left:8px;top:6px">Name</div>
<svg class="i" style="left:214px;top:2px;width:9px;height:5px" viewBox="0 0 9 5"><path d="M.5 4.500l4-4 4 4" fill="none" stroke="#777"/></svg>
<div class="p" style="left:3px;top:26px;width:1px;height:365px;background:#dfe9f5"></div>
<svg class="i" style="left:6px;top:29px"><use href="#upf"/></svg>
<div class="t" style="left:24px;top:28px">..</div>
<div class="p" style="left:6px;top:45px;width:424px;height:19px;background:#d9d9d9"></div>
<svg class="i" style="left:6px;top:47px"><use href="#ini"/></svg>
<div class="t" style="left:24px;top:47px">app.ini</div>
</div>

<!-- STATUS + QUEUE -->
<div class="t" style="left:3px;top:1008px;letter-spacing:-.33px">0 B of 86.1 GB in 0 of 40</div>
<div class="t" style="left:193px;top:1008px;letter-spacing:-.3px">919 B of 919 B in 1 of 1</div>
<div class="p" style="left:0;top:1026px;width:1600px;height:1px;background:#b4b4b4"></div>
<div class="hd" style="left:0;top:1029px;width:1600px"></div>
<div class="t" style="left:5px;top:1032px">Queue</div>
<div class="p" style="left:2px;top:1052px;width:21px;height:21px;background:#cce4f7;border:1px solid #3c96d6"></div>
<svg class="i" style="left:5px;top:1055px"><use href="#qr"/></svg>
<div class="s" style="left:28px;top:1052px"></div>
<svg class="i" style="left:35px;top:1055px"><use href="#pk"/></svg>
<svg class="i" style="left:57px;top:1055px;color:#aaa"><use href="#x"/></svg>
<div class="s" style="left:80px;top:1052px"></div>
<svg class="i" style="left:87px;top:1055px"><use href="#up"/></svg>
<svg class="i" style="left:109px;top:1055px"><use href="#dn"/></svg>
<div class="s" style="left:132px;top:1052px"></div>
<svg class="i" style="left:138px;top:1055px"><use href="#qp"/></svg>
<div class="a m" style="left:160px;top:1062px"></div>
<svg class="i" style="left:173px;top:1055px"><use href="#gear"/></svg>
<div class="panel" style="left:0;top:1077px;width:1600px;height:61px"></div>
<div class="sp" style="left:71px"></div><div class="sp" style="left:321px"></div><div class="sp" style="left:571px"></div><div class="sp" style="left:651px"></div><div class="sp" style="left:762px"></div><div class="sp" style="left:842px"></div><div class="sp" style="left:942px"></div>
<div class="t" style="left:8px;top:1082px">Operation</div>
<div class="t" style="left:78px;top:1082px">Source</div>
<div class="t" style="left:328px;top:1082px">Destination</div>
<div class="t" style="left:588px;top:1082px;letter-spacing:-.3px">Transferred</div>
<div class="t" style="left:730px;top:1082px">Time</div>
<div class="t" style="left:805px;top:1082px;letter-spacing:-.3px">Speed</div>
<div class="t" style="left:870px;top:1082px;letter-spacing:-.2px">Progress</div>
<div class="p" style="left:0;top:1140px;width:1600px;height:1px;background:#e2e2e2"></div>
<div class="p" style="left:1379px;top:1140px;width:1px;height:20px;background:#dcdcdc"></div>
<div class="p" style="left:1413px;top:1140px;width:1px;height:20px;background:#dcdcdc"></div>
<div class="p" style="left:1483px;top:1140px;width:1px;height:20px;background:#dcdcdc"></div>
<div class="p" style="left:1518px;top:1140px;width:1px;height:20px;background:#dcdcdc"></div>
<svg class="i" style="left:1388px;top:1142px"><use href="#lk"/></svg>
<div class="t" style="left:1431px;top:1142px;letter-spacing:-.8px">SFTP-3</div>
<svg class="i" style="left:1492px;top:1142px"><use href="#nt"/></svg>
<div class="t" style="left:1541px;top:1142px;letter-spacing:-.6px">0:12:01</div>
<div class="p" style="left:0;top:1160px;width:1600px;height:4px;background:#2b2b2b"></div>
<div class="p" style="left:1220px;top:1160px;width:41px;height:4px;background:#5a5a5a"></div>

<!-- EDITOR -->
<div class="p" style="left:620px;top:70px;width:979px;height:998px;background:#fff;border:1px solid #6b6b6b;border-right:0"></div>
<svg class="i" style="left:628px;top:78px"><use href="#pe"/></svg>
<div class="t" style="left:650px;top:78px;letter-spacing:.19px">/home/gitadmin/gogs/custom/conf/app.ini - Hetzner/gitadmin@168.1</div>
<div class="b" style="left:1025px;top:79px;width:40px"></div>
<div class="t" style="left:1064px;top:78px;letter-spacing:-.25px">250 - Editor - WinSCP</div>
<div class="p" style="left:621px;top:102px;width:979px;height:25px;background:#f0f0f0;border-bottom:1px solid #a6a6a6"></div>
<svg class="i" style="left:626px;top:106px"><use href="#sv"/></svg>
<svg class="i" style="left:649px;top:106px"><use href="#sa"/></svg>
<svg class="i" style="left:672px;top:106px"><use href="#rf"/></svg>
<div class="s" style="left:696px;top:104px"></div>
<svg class="i" style="left:701px;top:106px"><use href="#cp"/></svg>
<svg class="i" style="left:724px;top:106px"><use href="#ct"/></svg>
<svg class="i" style="left:747px;top:106px"><use href="#ps"/></svg>
<svg class="i" style="left:770px;top:106px;color:#b4b4b4"><use href="#x"/></svg>
<svg class="i" style="left:793px;top:106px"><use href="#sl"/></svg>
<div class="s" style="left:816px;top:104px"></div>
<svg class="i" style="left:823px;top:106px;color:#1f6fc0"><use href="#un"/></svg>
<svg class="i" style="left:845px;top:106px;color:#bcbcbc"><use href="#re"/></svg>
<div class="s" style="left:868px;top:104px"></div>
<svg class="i" style="left:874px;top:106px;color:#1f2d3d"><use href="#bn"/></svg>
<svg class="i" style="left:897px;top:106px"><use href="#rp"/></svg>
<svg class="i" style="left:920px;top:106px;color:#a8a8a8"><use href="#bn"/></svg>
<svg class="i" style="left:943px;top:106px"><use href="#gt"/></svg>
<div class="s" style="left:966px;top:104px"></div>
<div class="t" style="left:974px;top:106px">Encoding</div>
<div class="a" style="left:1028px;top:113px"></div>
<div class="p" style="left:1041px;top:108px;width:11px;height:11px;background:#fff;border:1px solid #777"></div>
<div class="t" style="left:1059px;top:106px">Color</div>
<div class="a" style="left:1091px;top:113px"></div>
<svg class="i" style="left:1104px;top:106px"><use href="#gear"/></svg>
<div class="s" style="left:1127px;top:104px"></div>
<svg class="i" style="left:1133px;top:106px"><use href="#hp"/></svg>
<pre>BRAND_NAME = Gogs
RUN_USER   = gitadmin
RUN_MODE   = prod

[database]
TYPE     = mysql
HOST     = 127.0.0.1:3306
NAME     = gogs
USER     = gogs
PASSWORD =             $
SSL_MODE = disable
PATH     = /home/gitadmin/gogs/data/gogs.db

[repository]
ROOT = /var/www/html/git

[server]
DOMAIN           = 168.       .250
HTTP_PORT        = 3000
EXTERNAL_URL     = http://168.        250:3000/
DISABLE_SSH      = false
SSH_PORT         = 22
START_SSH_SERVER = true
OFFLINE_MODE     = false

[mailer]
ENABLED = false

[service]
REGISTER_EMAIL_CONFIRM = false
ENABLE_NOTIFY_MAIL     = false
DISABLE_REGISTRATION   = false
ENABLE_CAPTCHA         = true
REQUIRE_SIGNIN_VIEW    = false

[picture]
DISABLE_GRAVATAR        = false
ENABLE_FEDERATED_AVATAR = false

[session]
PROVIDER = file

[log]
MODE      = file
LEVEL     = Info
ROOT_PATH = /home/gitadmin/gogs/log

[security]
INSTALL_LOCK = true
SECRET_KEY   =               N</pre>
<div class="p" style="left:624px;top:131px;width:1px;height:17px;background:#000"></div>
<div class="b" style="left:711px;top:295px;width:99px"></div>
<div class="b" style="left:806px;top:439px;width:60px"></div>
<div class="b" style="left:860px;top:475px;width:67px"></div>
<div class="b" style="left:745px;top:1015px;width:111px"></div>
<svg class="i" style="left:1164px;top:283px;width:8px;height:16px" viewBox="0 0 8 16"><path d="M1 .5h2l1 1 1-1h2M4 1.500v13M1 15.500h2l1-1 1 1h2" fill="none" stroke="#222"/></svg>
<div class="p" style="left:621px;top:1046px;width:979px;height:1px;background:#a6a6a6"></div>
<div class="es" style="left:622px;width:147px"></div>
<div class="es" style="left:771px;width:148px"></div>
<div class="es" style="left:921px;width:148px"></div>
<div class="es" style="left:1071px;width:147px"></div>
<div class="es" style="left:1221px;width:379px"></div>
<div class="t" style="left:625px;top:1051px;letter-spacing:-.3px">Line: 1/51</div>
<div class="t" style="left:775px;top:1051px;letter-spacing:-.1px">Column: 1</div>
<div class="t" style="left:925px;top:1051px;letter-spacing:-.15px">Character: 66 (0x42)</div>
<div class="t" style="left:1075px;top:1051px;width:142px;overflow:hidden;letter-spacing:-.1px">Encoding: 1252&nbsp; (ANSI - Latin I)</div>

<!-- WATERMARK -->
<div class="t" style="left:1295px;top:1063px;font-size:20px;line-height:22px;height:22px;color:rgba(150,150,150,.45)">Activate Windows</div>
<div class="t" style="left:1295px;top:1087px;font-size:15px;color:rgba(150,150,150,.6)">Go to Settings to activate Windows.</div>
</body></html>
